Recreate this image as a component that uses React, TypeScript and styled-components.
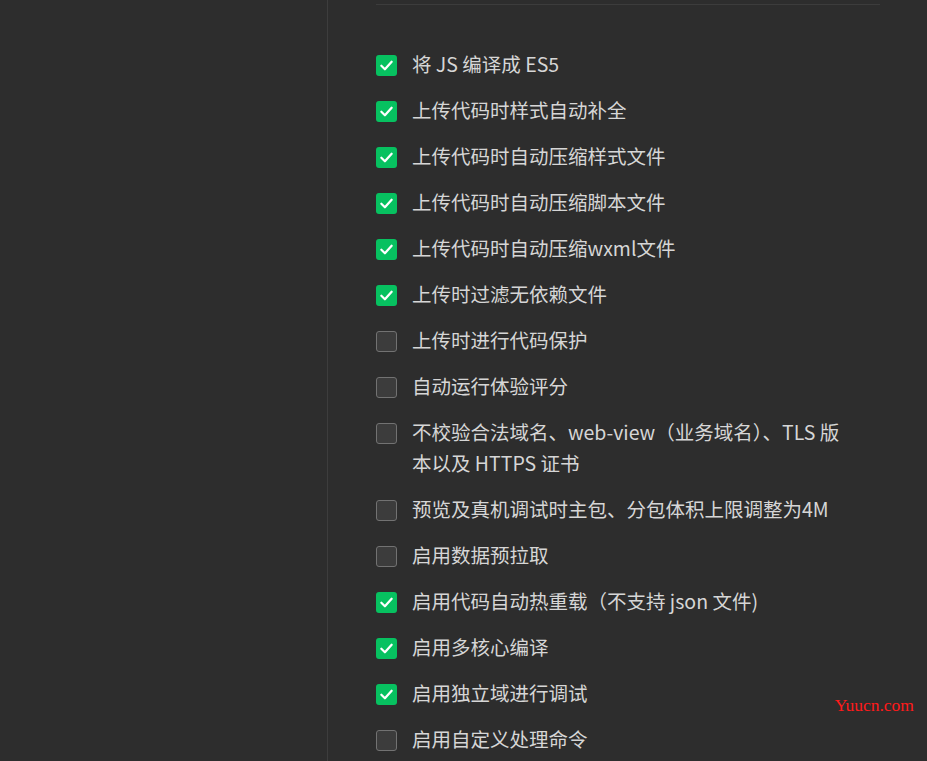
import React from "react";
import styled, { createGlobalStyle } from "styled-components";

const GlobalStyle = createGlobalStyle`
  html, body {
    margin: 0;
    padding: 0;
    background: #2d2d2d;
    overflow: hidden;
  }
  body {
    font-family: "Noto Sans CJK SC", "Noto Sans", sans-serif;
  }
`;

type Option = {
  label: string;
  checked: boolean;
};

const options: Option[] = [
  { label: "将 JS 编译成 ES5", checked: true },
  { label: "上传代码时样式自动补全", checked: true },
  { label: "上传代码时自动压缩样式文件", checked: true },
  { label: "上传代码时自动压缩脚本文件", checked: true },
  { label: "上传代码时自动压缩wxml文件", checked: true },
  { label: "上传时过滤无依赖文件", checked: true },
  { label: "上传时进行代码保护", checked: false },
  { label: "自动运行体验评分", checked: false },
  {
    label: "不校验合法域名、web-view（业务域名）、TLS 版本以及 HTTPS 证书",
    checked: false,
  },
  { label: "预览及真机调试时主包、分包体积上限调整为4M", checked: false },
  { label: "启用数据预拉取", checked: false },
  { label: "启用代码自动热重载（不支持 json 文件)", checked: true },
  { label: "启用多核心编译", checked: true },
  { label: "启用独立域进行调试", checked: true },
  { label: "启用自定义处理命令", checked: false },
];

const Page = styled.div`
  position: relative;
  display: flex;
  height: 761px;
  background: #2d2d2d;
`;

const Sidebar = styled.aside`
  width: 327px;
  flex-shrink: 0;
  border-right: 1px solid #3d3d3d;
  background: #2d2d2d;
`;

const Main = styled.main`
  flex: 1;
  padding: 4px 47px 0 48px;
`;

const Divider = styled.div`
  height: 1px;
  background: #3c3c3c;
`;

const List = styled.ul`
  list-style: none;
  margin: 43px 0 0;
  padding: 0;
  display: flex;
  flex-direction: column;
  gap: 15px;
`;

const Row = styled.li`
  display: flex;
  align-items: flex-start;
  gap: 15px;
`;

const Box = styled.span<{ $checked: boolean }>`
  flex-shrink: 0;
  width: 21px;
  height: 21px;
  margin-top: 7px;
  box-sizing: border-box;
  border-radius: 3px;
  display: flex;
  align-items: center;
  justify-content: center;
  background: ${(p) => (p.$checked ? "#07c160" : "#3c3c3c")};
  border: ${(p) => (p.$checked ? "none" : "1px solid #727272")};
`;

const Label = styled.span`
  max-width: 440px;
  color: #d6d6d6;
  font-size: 19.5px;
  line-height: 31px;
`;

const Watermark = styled.div`
  position: absolute;
  right: 13px;
  bottom: 45px;
  color: #ff1a1a;
  font-family: "Liberation Serif", "DejaVu Serif", serif;
  font-size: 17.5px;
`;

function Check() {
  return (
    <svg width="15" height="15" viewBox="0 0 16 16" fill="none">
      <path
        d="M2.5 8.3 L6.3 12 L13.5 4"
        stroke="#fff"
        strokeWidth="2.4"
        strokeLinecap="round"
        strokeLinejoin="round"
      />
    </svg>
  );
}

export default function App() {
  return (
    <>
      <GlobalStyle />
      <Page>
        <Sidebar />
        <Main>
          <Divider />
          <List>
            {options.map((o) => (
              <Row key={o.label}>
                <Box $checked={o.checked}>{o.checked && <Check />}</Box>
                <Label>{o.label}</Label>
              </Row>
            ))}
          </List>
        </Main>
        <Watermark>Yuucn.com</Watermark>
      </Page>
    </>
  );
}
